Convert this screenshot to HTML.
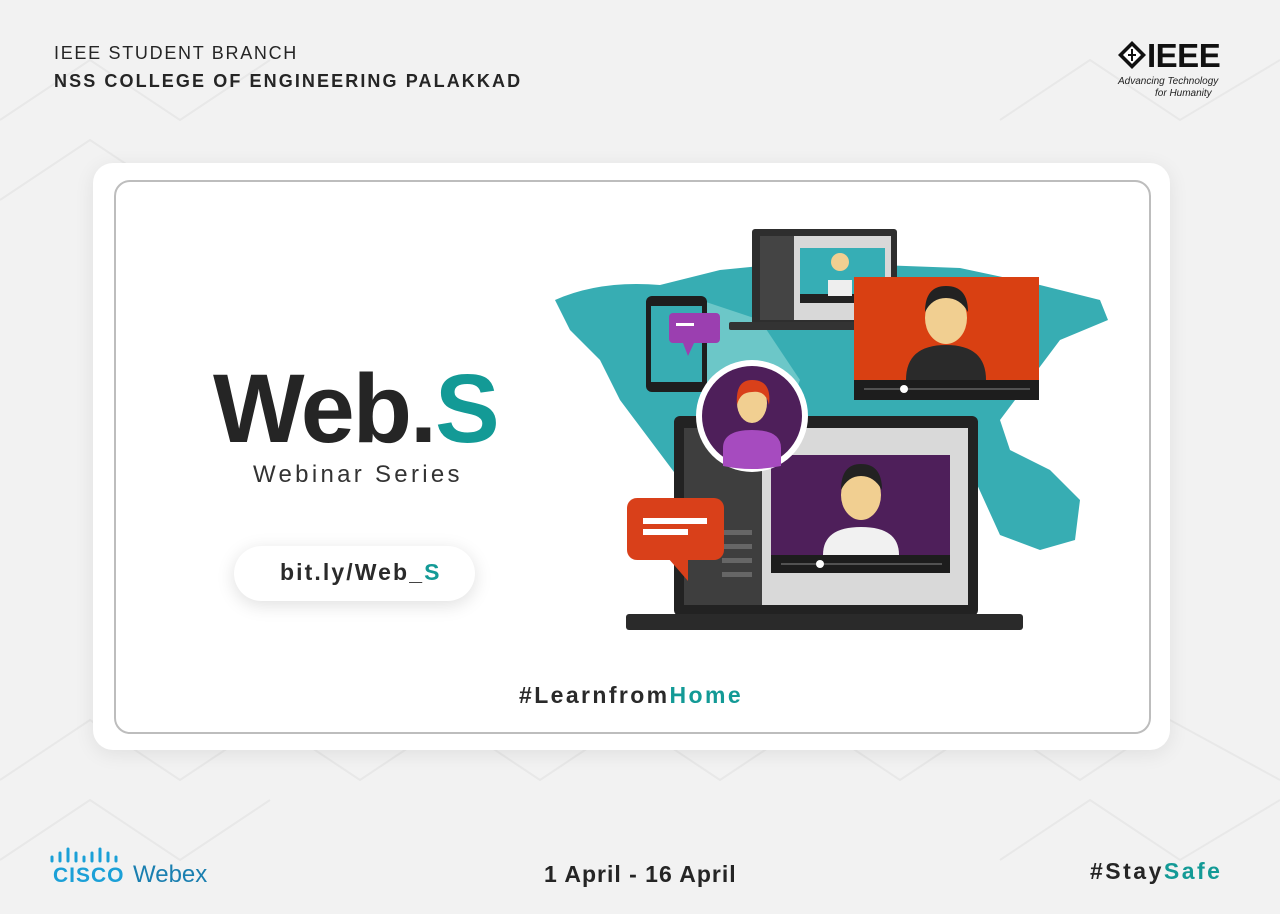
<!DOCTYPE html>
<html><head><meta charset="utf-8"><style>
*{margin:0;padding:0;box-sizing:border-box}
body{width:1280px;height:914px;background:#f2f2f2;position:relative;overflow:hidden;font-family:"Liberation Sans",sans-serif;color:#252525}
.a{position:absolute;white-space:nowrap}
.card{position:absolute;left:93px;top:163px;width:1077px;height:587px;background:#fff;border-radius:20px;box-shadow:0 4px 20px rgba(0,0,0,.08)}
.inner{position:absolute;left:114px;top:180px;width:1037px;height:554px;border:2px solid #bdbdbd;border-radius:16px}
.t{color:#139a96}
</style></head><body>
<svg class="a" style="left:0;top:0" width="1280" height="914">
<g stroke="#e8e8e8" stroke-width="2" fill="none">
<path d="M0 120 L90 60 L180 120 L270 60 M0 200 L90 140 L180 200 M1000 120 L1090 60 L1180 120 L1280 60 M0 780 L90 720 L180 780 L270 720 L360 780 L450 720 L540 780 L630 720 L720 780 L810 720 L900 780 L990 720 L1080 780 L1170 720 L1280 780 M0 860 L90 800 L180 860 L270 800 M1000 860 L1090 800 L1180 860 L1280 800"/>
</g></svg>
<div class="a" style="left:54px;top:43px;font-size:18px;letter-spacing:1.7px">IEEE STUDENT BRANCH</div>
<div class="a" style="left:54px;top:71px;font-size:18px;font-weight:bold;letter-spacing:2.1px">NSS COLLEGE OF ENGINEERING PALAKKAD</div>
<svg class="a" style="left:1117px;top:40px" width="30" height="30"><path d="M15 1 L29 15 L15 29 L1 15Z" fill="#111"/><path d="M15 6 L24 15 L15 24 L6 15Z" fill="#fff"/><path d="M15 9v12M11 15h8" stroke="#111" stroke-width="2"/></svg>
<div class="a" style="left:1147px;top:37px;font-size:33px;font-weight:bold;color:#111;letter-spacing:-0.5px">IEEE</div>
<div class="a" style="left:1118px;top:76px;font-size:10px;font-style:italic;color:#222">Advancing Technology</div>
<div class="a" style="left:1155px;top:88px;font-size:10px;font-style:italic;color:#222">for Humanity</div>
<div class="card"></div><div class="inner"></div>
<div class="a" style="left:213px;top:353px;font-size:97px;font-weight:bold;letter-spacing:-2px;color:#252525">Web.<span class="t">S</span></div>
<div class="a" style="left:253px;top:461px;font-size:24px;letter-spacing:3.3px;color:#333">Webinar Series</div>
<div class="a" style="left:234px;top:546px;width:241px;height:55px;border-radius:28px;background:#fff;box-shadow:0 4px 18px rgba(0,0,0,.13)"></div>
<div class="a" style="left:280px;top:559px;font-size:23px;font-weight:bold;color:#2a2a2a;letter-spacing:2.1px">bit.ly/Web_<span class="t">S</span></div>
<div class="a" style="left:519px;top:682px;font-size:23px;font-weight:bold;letter-spacing:2.4px;color:#2a2a2a">#Learnfrom<span class="t">Home</span></div>
<svg class="a" style="left:0;top:0" width="1280" height="914">
<path d="M555 300 Q600 280 660 285 L720 270 L800 262 L880 265 L960 268 L1040 285 L1100 300 L1108 320 L1060 340 L1030 380 L1000 420 L1010 450 L1050 470 L1080 500 L1075 540 L1040 550 L1000 535 L975 480 L940 470 L900 455 L850 470 L790 500 L720 510 L680 480 L650 440 L620 400 L600 360 L570 330 Z" fill="#37adb3"/>
<path d="M700 300 L760 320 L800 380 L780 430 L730 420 L700 380Z" fill="#6cc7c8"/>
<rect x="752" y="229" width="145" height="96" rx="3" fill="#2e2e2e"/>
<rect x="760" y="236" width="131" height="84" fill="#d8d8d8"/><rect x="760" y="236" width="34" height="84" fill="#444"/>
<rect x="800" y="248" width="85" height="48" fill="#36aeb5"/><rect x="800" y="294" width="85" height="9" fill="#222"/>
<circle cx="840" cy="262" r="9" fill="#f1cf91"/><rect x="828" y="280" width="24" height="16" fill="#eee"/>
<rect x="729" y="322" width="142" height="8" rx="2" fill="#333"/>
<rect x="854" y="277" width="185" height="123" fill="#d94012"/><rect x="854" y="380" width="185" height="20" fill="#1d1d1d"/>
<line x1="864" y1="389" x2="1030" y2="389" stroke="#888"/><circle cx="904" cy="389" r="4" fill="#fff"/>
<path d="M906 380 Q906 345 946 345 Q986 345 986 380Z" fill="#2a2a2a"/>
<ellipse cx="946" cy="318" rx="21" ry="26" fill="#f1cf91"/><path d="M925 312 Q925 286 946 286 Q968 286 968 312 Q960 298 946 298 Q932 298 925 312Z" fill="#222"/>
<rect x="646" y="296" width="61" height="96" rx="6" fill="#1e1e1e"/><rect x="651" y="306" width="51" height="76" fill="#37adb3"/>
<rect x="669" y="313" width="51" height="30" rx="4" fill="#9b3fb0"/><path d="M683 343 L688 356 L694 343Z" fill="#9b3fb0"/><rect x="676" y="323" width="18" height="3" fill="#fff"/>
<rect x="674" y="416" width="304" height="200" rx="6" fill="#222"/>
<rect x="684" y="428" width="284" height="177" fill="#d9d9d9"/><rect x="684" y="428" width="78" height="177" fill="#3e3e3e"/>
<g fill="#666"><rect x="722" y="530" width="30" height="5"/><rect x="722" y="544" width="30" height="5"/><rect x="722" y="558" width="30" height="5"/><rect x="722" y="572" width="30" height="5"/></g>
<rect x="771" y="455" width="179" height="100" fill="#4e1f5a"/><rect x="771" y="555" width="179" height="18" fill="#1d1d1d"/>
<line x1="781" y1="564" x2="942" y2="564" stroke="#888"/><circle cx="820" cy="564" r="4" fill="#fff"/>
<path d="M823 555 Q823 527 861 527 Q899 527 899 555Z" fill="#f1f1f1"/>
<ellipse cx="861" cy="495" rx="20" ry="25" fill="#f1cf91"/><path d="M841 490 Q841 464 861 464 Q882 464 882 490 Q874 476 861 476 Q848 476 841 490Z" fill="#222"/>
<rect x="626" y="614" width="397" height="16" rx="3" fill="#2a2a2a"/>
<circle cx="752" cy="416" r="56" fill="#fff"/><circle cx="752" cy="416" r="50" fill="#4e1f5a"/>
<path d="M723 466 L723 448 Q723 430 752 430 Q781 430 781 448 L781 466 Q752 472 723 466Z" fill="#a64bbf"/>
<ellipse cx="752" cy="403" rx="15" ry="20" fill="#f1cf91"/><path d="M737 405 Q735 380 752 380 Q772 380 769 405 Q766 390 752 392 Q740 392 737 405Z" fill="#d9401a"/>
<rect x="627" y="498" width="97" height="62" rx="10" fill="#d9401a"/><path d="M668 558 L688 581 L688 558Z" fill="#d9401a"/>
<rect x="643" y="518" width="64" height="6" fill="#fff"/><rect x="643" y="529" width="45" height="6" fill="#fff"/>
</svg>
<svg class="a" style="left:50px;top:846px" width="80" height="20"><g stroke="#1ba0d7" stroke-width="3" stroke-linecap="round"><path d="M2 11v4M10 7v8M18 3v12M26 7v8M34 11v4M42 7v8M50 3v12M58 7v8M66 11v4"/></g></svg>
<div class="a" style="left:53px;top:864px;font-size:21px;font-weight:bold;color:#1ba0d7;letter-spacing:1px">CISCO</div>
<div class="a" style="left:133px;top:861px;font-size:24px;color:#1a7fb0">Webex</div>
<div class="a" style="left:544px;top:861px;font-size:23px;font-weight:bold;color:#252525;letter-spacing:1px">1 April - 16 April</div>
<div class="a" style="left:1090px;top:858px;font-size:23px;font-weight:bold;color:#252525;letter-spacing:2.5px">#Stay<span class="t">Safe</span></div>
</body></html>
